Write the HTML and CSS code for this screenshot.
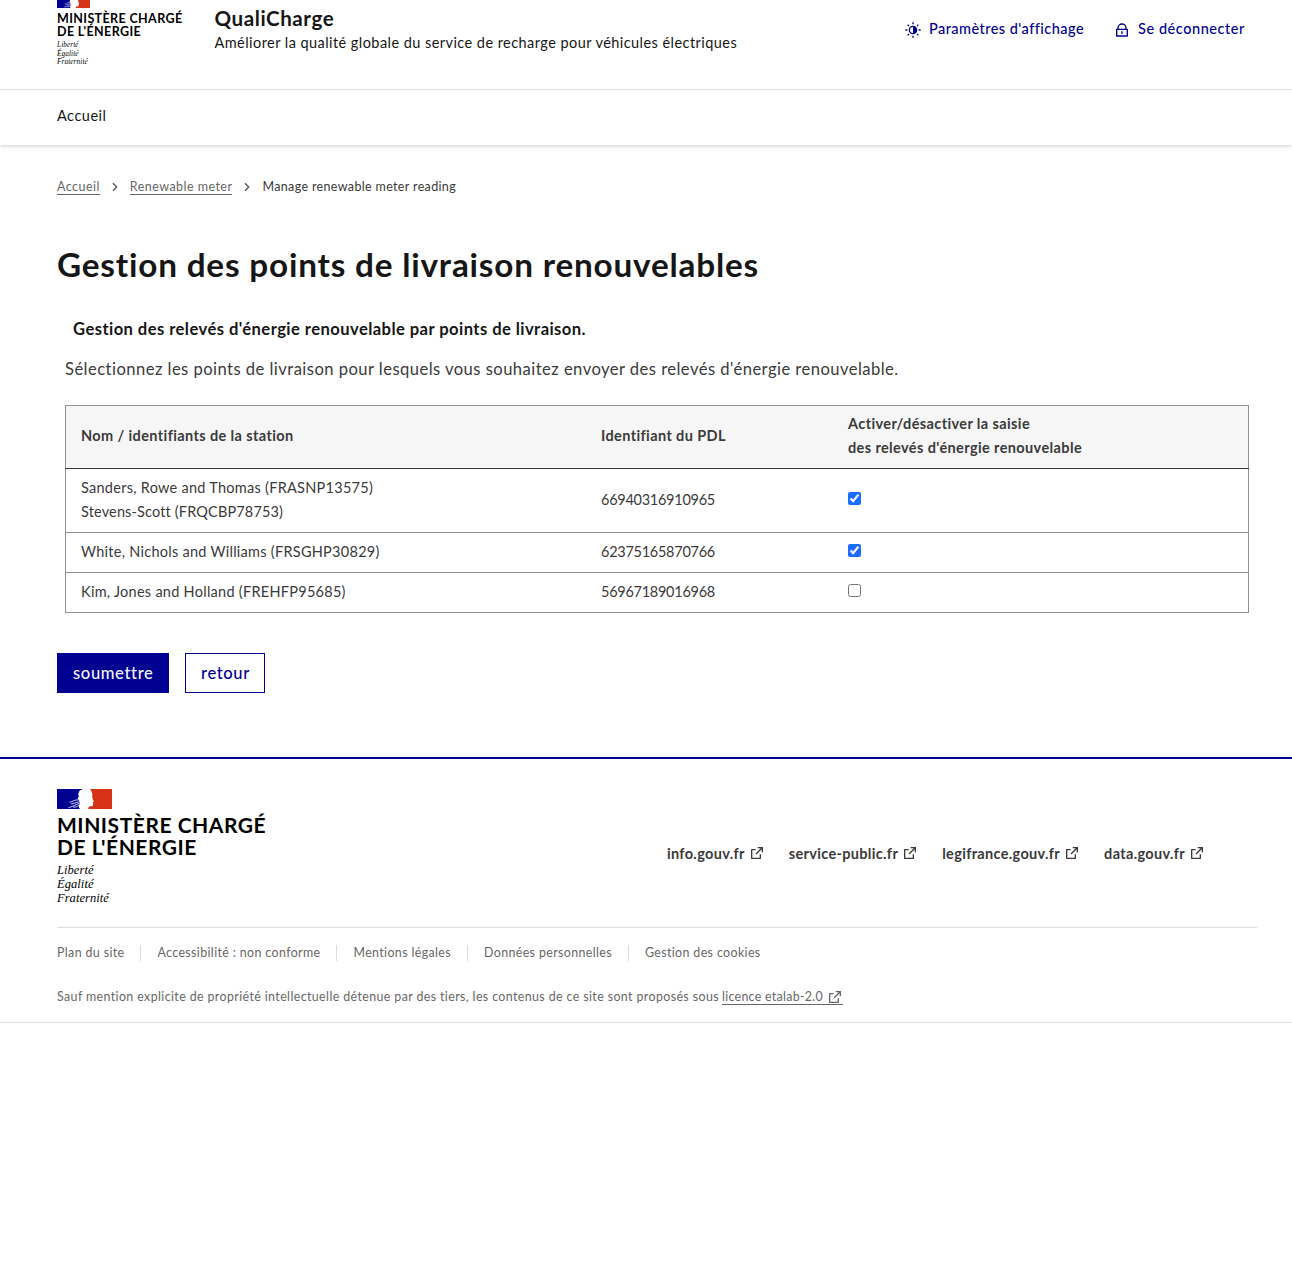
FILE: index.html
```html
<!DOCTYPE html>
<html lang="fr">
<head>
<meta charset="utf-8">
<title>QualiCharge</title>
<link rel="stylesheet" href="styles.css">
</head>
<body>
<svg class="defs" aria-hidden="true">
  <symbol id="flag" viewBox="0 0 55 20">
    <path fill="#fff" d="M0 0h55v20H0z"/>
    <path fill="#000091" d="M0 0h26.500c-2.600.4-4.400 1.700-4.800 3.500l-.5 2 .6 2-1.100 2.200c1.300 1.500 2.300 3.200 1.700 5.300-.5 2-1.200 3.500.5 5H0z"/>
    <path fill="#d63218" d="M33 0H55v20H31.200c0-1.700.8-3 2.800-2.700 1.600.2 2.200-.5 2-1.800l.2-1.200-.5-.9 1.200-1-1.700-3.600c.5-2.800.2-5.800-2.200-8.800z"/>
    <path fill="none" stroke="#fff" stroke-width=".8" d="M12.500 13.200c3-.3 4-2.400 8.500-2.300M14 15c3 0 5-2.200 8-2M11.500 18.500c3.500-.5 6-2.500 10.500-4M16 17.800c2.500 1 4-.3 6-1.300"/>
  </symbol>
  <symbol id="ext" viewBox="0 0 24 24"><path d="M10 6v2H5v11h11v-5h2v6a1 1 0 0 1-1 1H4a1 1 0 0 1-1-1V7a1 1 0 0 1 1-1h6Zm11-3v8h-2V6.413l-7.793 7.794-1.414-1.414L17.585 5H13V3h8Z"/></symbol>
  <symbol id="lock" viewBox="0 0 24 24"><path d="M19 10h1a1 1 0 0 1 1 1v10a1 1 0 0 1-1 1H4a1 1 0 0 1-1-1V11a1 1 0 0 1 1-1h1V9a7 7 0 1 1 14 0v1ZM5 12v8h14v-8H5Zm6 2h2v4h-2v-4Zm6-4V9A5 5 0 0 0 7 9v1h10Z"/></symbol>
  <symbol id="theme" viewBox="0 0 24 24"><path fill-rule="evenodd" d="M12 5.500a6.500 6.500 0 1 1 0 13 6.500 6.500 0 0 1 0-13Zm0 2v9a4.500 4.500 0 0 1 0-9Z"/><path d="M11 .5h2v3h-2zM11 20.500h2v3h-2zM.5 11h3v2h-3zM20.500 11h3v2h-3zM3.200 4.600l1.400-1.400 2 2-1.400 1.400zM17.400 18.800l1.400-1.400 2 2-1.400 1.400zM3.200 19.400l2-2 1.400 1.400-2 2zM17.400 5.200l2-2 1.400 1.400-2 2z"/></symbol>
  <symbol id="chevron" viewBox="0 0 24 24"><path d="M13.172 12 8.222 7.050l1.414-1.414L16 12l-6.364 6.364-1.414-1.414 4.950-4.950Z"/></symbol>
</svg>

<header class="header">
  <div class="header-body">
    <a class="brand">
      <svg class="brand-flag"><use href="#flag"/></svg>
      <span class="brand-name"><span>MINISTÈRE CHARGÉ</span><span>DE L'ÉNERGIE</span></span>
      <span class="brand-motto">Liberté<br>Égalité<br>Fraternité</span>
    </a>
    <div class="service">
      <p class="service-title">QualiCharge</p>
      <p class="service-tagline">Améliorer la qualité globale du service de recharge pour véhicules électriques</p>
    </div>
    <div class="tools">
      <a class="tool"><svg class="icon"><use href="#theme"/></svg><span>Paramètres d'affichage</span></a>
      <a class="tool"><svg class="icon"><use href="#lock"/></svg><span class="logout">Se déconnecter</span></a>
    </div>
  </div>
  <nav class="nav"><a>Accueil</a></nav>
</header>

<main class="main">
  <nav class="breadcrumb">
    <a>Accueil</a><svg class="icon"><use href="#chevron"/></svg><a>Renewable meter</a><svg class="icon"><use href="#chevron"/></svg><span>Manage renewable meter reading</span>
  </nav>
  <h1>Gestion des points de livraison renouvelables</h1>
  <section class="readings">
    <h2 class="caption">Gestion des relevés d'énergie renouvelable par points de livraison.</h2>
    <p class="intro">Sélectionnez les points de livraison pour lesquels vous souhaitez envoyer des relevés d'énergie renouvelable.</p>
    <table class="table">
      <colgroup><col class="col-station"><col class="col-pdl"><col></colgroup>
      <thead>
        <tr><th>Nom / identifiants de la station</th><th>Identifiant du PDL</th><th>Activer/désactiver la saisie<br>des relevés d'énergie renouvelable</th></tr>
      </thead>
      <tbody>
        <tr><td>Sanders, Rowe and Thomas (FRASNP13575)<br><span class="tight">Stevens-Scott (FRQCBP78753)</span></td><td class="pdl">66940316910965</td><td><input type="checkbox" checked></td></tr>
        <tr><td>White, Nichols and Williams (FRSGHP30829)</td><td class="pdl">62375165870766</td><td><input type="checkbox" checked></td></tr>
        <tr><td>Kim, Jones and Holland (FREHFP95685)</td><td class="pdl">56967189016968</td><td><input type="checkbox"></td></tr>
      </tbody>
    </table>
  </section>
  <div class="actions">
    <button class="btn btn-primary">soumettre</button>
    <button class="btn btn-secondary">retour</button>
  </div>
</main>

<footer class="footer">
  <div class="footer-body">
    <a class="brand brand-large">
      <svg class="brand-flag"><use href="#flag"/></svg>
      <span class="brand-name"><span>MINISTÈRE CHARGÉ</span><span>DE L'ÉNERGIE</span></span>
      <span class="brand-motto">Liberté<br>Égalité<br>Fraternité</span>
    </a>
    <ul class="sites">
      <li><a>info.gouv.fr<svg class="icon"><use href="#ext"/></svg></a></li>
      <li><a>service-public.fr<svg class="icon"><use href="#ext"/></svg></a></li>
      <li><a>legifrance.gouv.fr<svg class="icon"><use href="#ext"/></svg></a></li>
      <li><a>data.gouv.fr<svg class="icon"><use href="#ext"/></svg></a></li>
    </ul>
  </div>
  <div class="footer-bottom">
    <ul class="legal">
      <li>Plan du site</li><li>Accessibilité : non conforme</li><li>Mentions légales</li><li>Données personnelles</li><li>Gestion des cookies</li>
    </ul>
    <p class="licence"><span>Sauf mention explicite de propriété intellectuelle détenue par des tiers, les contenus de ce site sont proposés sous</span> <a>licence etalab-2.0<svg class="icon"><use href="#ext"/></svg></a></p>
  </div>
</footer>
</body>
</html>
```
FILE: styles.css
```css
* { box-sizing: border-box; }
body { margin: 0; background: #fff; color: #3a3a3a; font: 16.600px/24px Lato, "Open Sans", sans-serif; letter-spacing: .45px; font-variant-ligatures: none; }
p, h1, h2, ul { margin: 0; padding: 0; }
ul { list-style: none; }
.defs { display: none; }
.icon { width: 16px; height: 16px; fill: currentColor; flex: none; }

.header { box-shadow: 0 1px 4px rgba(0, 0, 18, .2); }
.header-body { display: flex; align-items: flex-start; height: 90px; padding: 0 47px 0 57px; border-bottom: 1px solid #ddd; }
.brand { display: flex; flex-direction: column; width: 125px; color: #000; white-space: nowrap; }
.brand-flag { width: 33px; height: 12px; margin-top: -4px; }
.brand-name { display: flex; flex-direction: column; align-items: flex-start; margin-top: 4px; font-size: 12.500px; line-height: 13px; font-weight: 700; letter-spacing: .38px; }
.brand-motto { margin-top: 3px; font: italic 7.200px/8.500px "Liberation Serif", serif; letter-spacing: .13px; }
.service { margin-left: 32.500px; padding-top: 4px; color: #161616; }
.service-title { font-size: 20.600px; line-height: 28px; font-weight: 700; letter-spacing: .55px; }
.service-tagline { margin-top: -1px; font-size: 14.500px; line-height: 24px; letter-spacing: .445px; }
.tools { display: flex; gap: 30px; margin-left: auto; padding-top: 18px; color: #000091; }
.tool { display: flex; align-items: center; height: 24px; gap: 8px; font-size: 14.500px; font-weight: 500; letter-spacing: .46px; }
.tool span { margin-bottom: 2px; }
.tool .logout { letter-spacing: .56px; }
.nav { height: 55px; padding: 14px 57px; color: #161616; font-size: 14.500px; letter-spacing: .5px; }

.main { padding: 32px 35px 64px 57px; }
.breadcrumb { display: flex; align-items: center; height: 20px; font-size: 12.500px; line-height: 16px; letter-spacing: .35px; }
.breadcrumb a { color: #666; border-bottom: 1px solid #666; line-height: 15px; letter-spacing: .46px; }
.breadcrumb .icon { margin: 0 7px; fill: #555; }
h1 { margin-top: 47px; color: #161616; font-size: 33.300px; line-height: 40px; letter-spacing: .8px; }
.readings { margin-top: 33px; padding: 0 8px; }
.caption { padding-left: 8px; color: #161616; font-size: 16.600px; line-height: 24px; letter-spacing: .43px; }
.intro { margin-top: 16px; }
.table { width: 100%; margin-top: 24px; border-collapse: collapse; border: 1px solid #929292; table-layout: fixed; font-size: 14.500px; letter-spacing: .27px; }
.col-station { width: 520.500px; }
.col-pdl { width: 247px; }
.table th, .table td { padding: 7px 15px 8px; text-align: left; border-bottom: 1px solid #929292; }
.table thead th { padding-top: 6px; background: #f6f6f6; border-bottom-color: #3a3a3a; letter-spacing: .385px; }
.table .pdl { letter-spacing: -.27px; }
.table .tight { letter-spacing: .15px; }
.table input { width: 13px; height: 13px; margin: 0; accent-color: #1a6dff; }
.actions { display: flex; gap: 16px; margin-top: 40px; }
.btn { height: 40px; border: 1px solid #000091; padding: 0 15px; font: 500 16.600px/24px Lato, sans-serif; letter-spacing: .62px; }
.btn-primary { width: 112px; background: #000091; color: #f5f5fe; }
.btn-secondary { width: 80px; background: #fff; color: #000091; }

.footer { border-top: 2px solid #000091; border-bottom: 1px solid #ddd; padding: 30px 35px 0 57px; }
.footer-body { display: flex; height: 138px; }
.brand-large { width: 210px; }
.brand-large .brand-flag { width: 55px; height: 20px; margin-top: 0; }
.brand-large .brand-name { margin-top: 5px; font-size: 21px; line-height: 22px; letter-spacing: .53px; }
.brand-large .brand-motto { margin-top: 5px; font-size: 12.500px; line-height: 14px; letter-spacing: .06px; }
.sites { display: flex; gap: 24px; margin-left: auto; padding: 53px 52px 0 0; font-size: 14.500px; font-weight: 700; letter-spacing: .33px; }
.sites a { display: flex; align-items: center; gap: 4px; }
.sites .icon { margin-bottom: 2px; }
.footer-bottom { height: 95px; border-top: 1px solid #ddd; padding-top: 17px; color: #666; font-size: 12.400px; letter-spacing: .38px; }
.legal { display: flex; line-height: 16px; }
.legal li + li { margin-left: 16px; padding-left: 16px; border-left: 1px solid #ddd; }
.licence { display: flex; gap: 3px; margin-top: 26px; line-height: 20px; letter-spacing: .396px; }
.licence a { display: flex; align-items: center; height: 17px; margin-top: 1px; padding-top: 1px; gap: 4px; border-bottom: 1px solid #666; letter-spacing: .3px; }
```
